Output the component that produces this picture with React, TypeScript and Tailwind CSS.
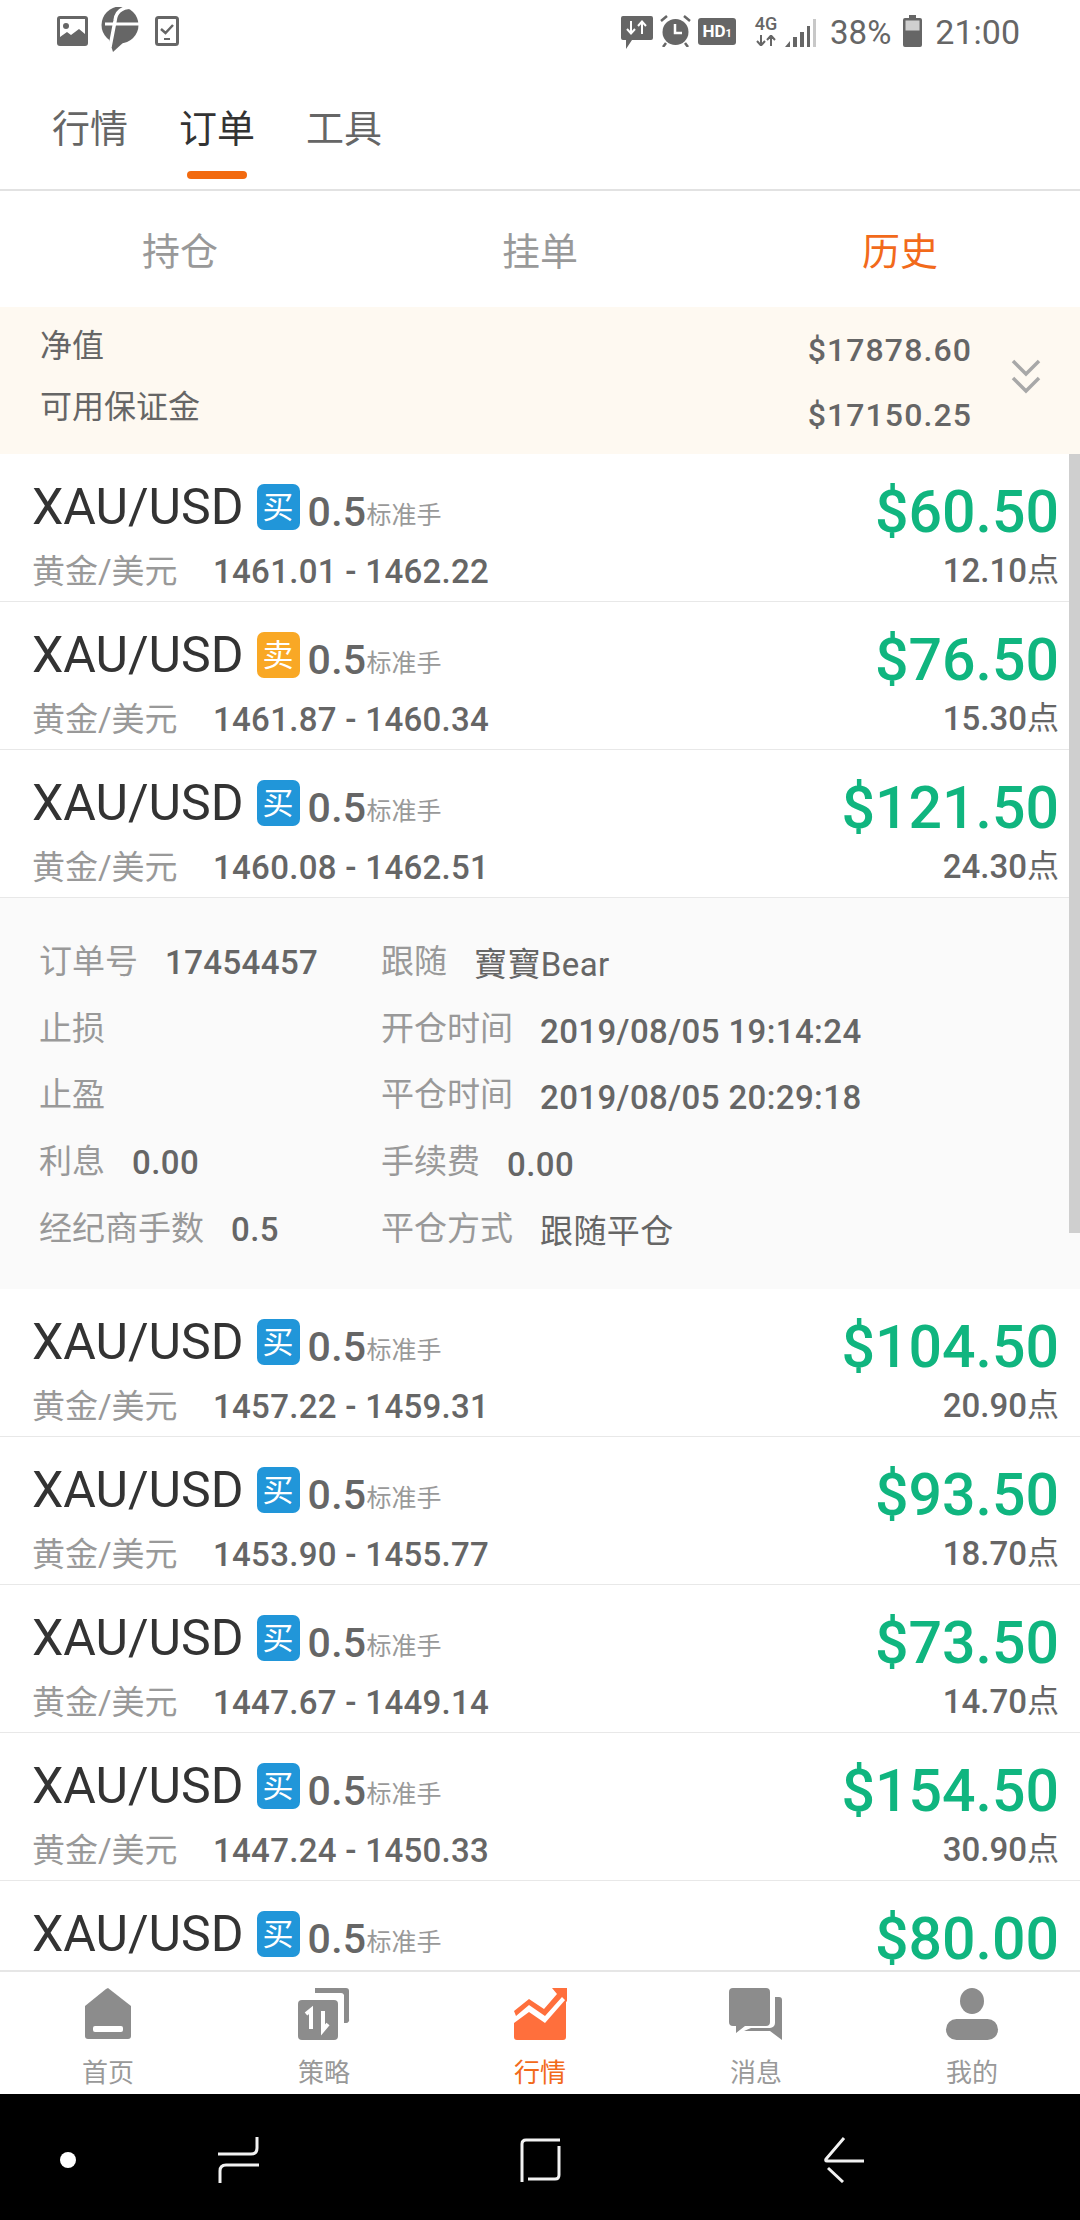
import React from 'react';

interface Order {
  side: 'buy' | 'sell';
  range: string;
  profit: string;
  points: string;
}

const firstOrders: Order[] = [
  { side: 'buy', range: '1461.01 - 1462.22', profit: '$60.50', points: '12.10' },
  { side: 'sell', range: '1461.87 - 1460.34', profit: '$76.50', points: '15.30' },
  { side: 'buy', range: '1460.08 - 1462.51', profit: '$121.50', points: '24.30' },
];

const moreOrders: Order[] = [
  { side: 'buy', range: '1457.22 - 1459.31', profit: '$104.50', points: '20.90' },
  { side: 'buy', range: '1453.90 - 1455.77', profit: '$93.50', points: '18.70' },
  { side: 'buy', range: '1447.67 - 1449.14', profit: '$73.50', points: '14.70' },
  { side: 'buy', range: '1447.24 - 1450.33', profit: '$154.50', points: '30.90' },
];

const detailLeft = [
  { label: '订单号', value: '17454457' },
  { label: '止损', value: '' },
  { label: '止盈', value: '' },
  { label: '利息', value: '0.00' },
  { label: '经纪商手数', value: '0.5' },
];

const detailRight = [
  { label: '跟随', value: '寶寶Bear', plain: true },
  { label: '开仓时间', value: '2019/08/05 19:14:24' },
  { label: '平仓时间', value: '2019/08/05 20:29:18' },
  { label: '手续费', value: '0.00' },
  { label: '平仓方式', value: '跟随平仓', plain: true },
];

const TopLine: React.FC<{ side: Order['side'] }> = ({ side }) => (
  <div className="flex items-center h-[48px] mt-[29px]">
    <span className="text-[50px] leading-none text-[#333]">XAU/USD</span>
    <span
      className={`ml-[13px] w-[43px] h-[46px] rounded-[7px] text-white text-[31px] leading-none flex items-center justify-center ${
        side === 'buy' ? 'bg-[#2196d9]' : 'bg-[#f9a825]'
      }`}
    >
      {side === 'buy' ? '买' : '卖'}
    </span>
    <span className="ml-[8px] text-[41px] leading-none font-medium text-[#666] mt-[10px] tracking-[0.3px]">0.5</span>
    <span className="text-[25px] leading-none text-[#999] mt-[16px]">标准手</span>
  </div>
);

const OrderRow: React.FC<{ order: Order }> = ({ order }) => (
  <div className="h-[148px] shrink-0 border-b border-[#e8e8e8] pl-[32px] pr-[21px] flex justify-between">
    <div>
      <TopLine side={order.side} />
      <div className="flex items-center mt-[20px] h-[40px]">
        <span className="text-[33px] leading-none text-[#999] w-[181px]">黄金/美元</span>
        <span className="text-[33px] leading-none font-medium text-[#666] tracking-[0.3px]">{order.range}</span>
      </div>
    </div>
    <div className="flex flex-col items-end">
      <span className="text-[59px] leading-none font-medium text-[#10b57f] mt-[28px] h-[60px]">{order.profit}</span>
      <span className="text-[33px] leading-none font-medium text-[#666] mt-[8px] h-[40px] flex items-center">
        {order.points}
        <span className="text-[32px] font-normal">点</span>
      </span>
    </div>
  </div>
);

const ClippedRow: React.FC<{ side: Order['side']; profit: string }> = ({ side, profit }) => (
  <div className="h-[88px] shrink-0 pl-[32px] pr-[21px] flex justify-between">
    <TopLine side={side} />
    <span className="text-[59px] leading-none font-medium text-[#10b57f] mt-[28px] h-[59px]">{profit}</span>
  </div>
);

const DetailItem: React.FC<{ label: string; value: string; plain?: boolean; shift?: boolean }> = ({ label, value, plain, shift }) => (
  <div className="flex items-center gap-[27px] h-[66.750px]">
    <span className="text-[33px] leading-none text-[#999]">{label}</span>
    {value && (
      <span className={`text-[33px] leading-none text-[#666] tracking-[0.4px] ${plain ? '' : 'font-medium'} ${shift ? 'mt-[6px]' : 'mt-[2px]'}`}>
        {value}
      </span>
    )}
  </div>
);

const StatusBar = () => (
  <div className="h-[60px] shrink-0 flex items-center pl-[57px] pr-[60px] text-[#666]">
    <svg width="31" height="30" viewBox="0 0 31 30" className="mt-[2px]">
      <rect width="31" height="30" rx="3" fill="#666" />
      <rect x="3" y="3" width="25" height="24" fill="#fff" />
      <circle cx="9" cy="10" r="3" fill="#666" />
      <path d="M3 21 L10 16 L14 19 L22 13 L28 18 V27 H3Z" fill="#666" />
    </svg>
    <svg width="38" height="45" viewBox="0 0 38 45" className="ml-[13px] mb-[2px]">
      <circle cx="19" cy="18" r="18.500" fill="#666" />
      <path d="M8 32 L24 34 L12 45Z" fill="#666" />
      <path d="M30 0 Q15 1 14 14 L9 40" fill="none" stroke="#fff" strokeWidth="3.500" />
      <path d="M4 17 H38" fill="none" stroke="#fff" strokeWidth="3" />
    </svg>
    <svg width="24" height="30" viewBox="0 0 24 30" className="ml-[16px] mt-[2px]">
      <rect x="1.500" y="1.500" width="21" height="27" rx="2" fill="none" stroke="#666" strokeWidth="3" />
      <path d="M6 13 L10.500 17 L18 9" fill="none" stroke="#666" strokeWidth="2.500" />
      <rect x="9" y="22" width="6" height="2" fill="#666" />
    </svg>
    <div className="flex-1" />
    <svg width="32" height="33" viewBox="0 0 32 33" className="mt-[4px]">
      <path d="M2 0 H30 A2 2 0 0 1 32 2 V22 A2 2 0 0 1 30 24 H11 L5 33 V24 H2 A2 2 0 0 1 0 22 V2 A2 2 0 0 1 2 0Z" fill="#666" />
      <path d="M10 5 V17 M6 13 L10 17.500 L14 13 M21 18 V6 M17 10 L21 5.500 L25 10" fill="none" stroke="#fff" strokeWidth="2" />
    </svg>
    <svg width="31" height="32" viewBox="0 0 31 32" className="ml-[7px] mt-[2px]">
      <circle cx="15.500" cy="17" r="13" fill="#666" />
      <path d="M15 9 V18 H22" fill="none" stroke="#fff" strokeWidth="2.500" />
      <path d="M1 6 L7 1 M24 1 L30 6 M6 28 L3 32 M25 28 L28 32" stroke="#666" strokeWidth="2.500" />
    </svg>
    <div className="ml-[7px] w-[38px] h-[27px] rounded-[3px] bg-[#666] text-white font-bold text-[17px] leading-none flex items-center justify-center mt-[3px]">
      HD<span className="text-[11px] mt-[4px]">1</span>
    </div>
    <div className="ml-[18px] w-[24px] flex flex-col items-center mt-[3px]">
      <span className="text-[18px] leading-[14px] font-medium">4G</span>
      <svg width="20" height="11" viewBox="0 0 20 11" className="mt-[4px]">
        <path d="M5 0 V9 M1 6 L5 10.500 L9 6 M15 11 V2 M11 5 L15 0.500 L19 5" fill="none" stroke="#666" strokeWidth="2" />
      </svg>
    </div>
    <svg width="32" height="29" viewBox="0 0 32 29" className="ml-[7px] mt-[4px]">
      <path d="M0 29 L5 23 V29Z M8 19 H12 V29 H8Z M15 14 H19 V29 H15Z M22 8 H25 V29 H22Z" fill="#666" />
      <path d="M28 1 H31 V29 H28Z" fill="#c8c8c8" />
    </svg>
    <span className="ml-[13px] text-[33px] leading-none mt-[4px]">38%</span>
    <svg width="19" height="32" viewBox="0 0 19 32" className="ml-[12px] mt-[2px]">
      <path d="M6 0 H13 V3 H17 A2 2 0 0 1 19 5 V30 A2 2 0 0 1 17 32 H2 A2 2 0 0 1 0 30 V5 A2 2 0 0 1 2 3 H6Z" fill="#666" />
      <rect x="2.500" y="5.500" width="14" height="10" fill="#cfcfcf" />
    </svg>
    <span className="ml-[13px] text-[34px] leading-none mt-[4px]">21:00</span>
  </div>
);

const navItems = [
  {
    label: '首页',
    icon: (
      <svg width="54" height="54" viewBox="0 0 54 54">
        <path d="M27 1 L50 19 V49 A3 3 0 0 1 47 52 H7 A3 3 0 0 1 4 49 V19 L25 2Z" fill="#8c8c8c" />
        <rect x="12" y="39" width="30" height="6" rx="2" fill="#fff" />
      </svg>
    ),
  },
  {
    label: '策略',
    icon: (
      <svg width="54" height="54" viewBox="0 0 54 54">
        <path d="M18 1 H49 A3 3 0 0 1 52 4 V32 A3 3 0 0 1 49 36 H47 V8 A3 3 0 0 0 44 6 H18Z" fill="#8c8c8c" />
        <rect x="1" y="13" width="40" height="40" rx="4" fill="#8c8c8c" />
        <path d="M14 42 V23 L9 27 M26 24 V43 L31 37" fill="none" stroke="#fff" strokeWidth="4" />
      </svg>
    ),
  },
  {
    label: '行情',
    icon: (
      <svg width="54" height="54" viewBox="0 0 54 54">
        <path d="M1 24 L16 12 L31 22 L44 7 L39 1 H54 V15 L49 10 L32 29 L16 18 L3 29Z" fill="#ff6f3c" />
        <path d="M1 36 L16 25 L32 36 L53 12 V50 A3 3 0 0 1 50 53 H4 A3 3 0 0 1 1 50Z" fill="#ff6f3c" />
      </svg>
    ),
  },
  {
    label: '消息',
    icon: (
      <svg width="54" height="54" viewBox="0 0 54 54">
        <path d="M4 1 H37 A4 4 0 0 1 41 5 V35 A4 4 0 0 1 37 39 H16 L7 46 V39 H4 A4 4 0 0 1 0 35 V5 A4 4 0 0 1 4 1Z" fill="#8c8c8c" />
        <path d="M46 10 H50 A3 3 0 0 1 53 13 V53 L41 44 H15 L22 41 H41 A5 5 0 0 0 46 36Z" fill="#8c8c8c" />
      </svg>
    ),
  },
  {
    label: '我的',
    icon: (
      <svg width="54" height="54" viewBox="0 0 54 54">
        <ellipse cx="27" cy="14" rx="12" ry="13" fill="#8c8c8c" />
        <rect x="1" y="32" width="52" height="21" rx="10.500" fill="#8c8c8c" />
      </svg>
    ),
  },
];

const BottomNav = () => (
  <div className="h-[124px] shrink-0 border-t-2 border-[#e6e6e6] grid grid-cols-5 bg-white">
    {navItems.map((item) => (
      <div key={item.label} className="flex flex-col items-center pt-[15px]">
        {item.icon}
        <span className={`text-[26px] leading-none mt-[19px] ${item.label === '行情' ? 'text-[#f26a1b]' : 'text-[#999]'}`}>{item.label}</span>
      </div>
    ))}
  </div>
);

const SystemBar = () => (
  <div className="h-[126px] shrink-0 bg-black flex items-center pl-[60px] pt-[5px]">
    <div className="w-[16px] h-[16px] rounded-full bg-white" />
    <svg width="41" height="46" viewBox="0 0 41 46" className="ml-[142px]" fill="none" stroke="#f2f2f2" strokeWidth="3">
      <path d="M39 0 V11 Q39 17 33 17 H0" />
      <path d="M41 28 H8 Q2 28 2 34 V46" />
    </svg>
    <svg width="41" height="44" viewBox="0 0 41 44" className="ml-[261px]" fill="none" stroke="#f2f2f2" strokeWidth="3">
      <path d="M2 44 V6 Q2 2 6 2 H40" />
      <path d="M8 41 H35 Q39 41 39 37 V8" />
    </svg>
    <svg width="41" height="46" viewBox="0 0 41 46" className="ml-[262px]" fill="none" stroke="#f2f2f2" strokeWidth="3">
      <path d="M21 1 L3 22 Q2 24 4 24 H41" />
      <path d="M5 31 L20 45" />
    </svg>
  </div>
);

export default function App() {
  return (
    <div className="w-[1080px] h-[2220px] bg-white flex flex-col overflow-hidden font-[Roboto,'Noto_Sans_CJK_SC',sans-serif]">
      <StatusBar />

      <div className="h-[131px] shrink-0 border-b-2 border-[#e2e2e2] flex pl-[52px] gap-[51px] bg-white">
        <div className="text-[38px] leading-none text-[#666] pt-[50px]">行情</div>
        <div className="flex flex-col items-center text-[38px] leading-none text-[#333] pt-[50px]">
          订单
          <div className="w-[60px] h-[8px] rounded-[4px] bg-[#f26a0f] mt-[23px]" />
        </div>
        <div className="text-[38px] leading-none text-[#666] pt-[50px]">工具</div>
      </div>

      <div className="h-[116px] shrink-0 grid grid-cols-3 items-center text-[38px] leading-none text-center text-[#999] pt-[6px]">
        <span>持仓</span>
        <span>挂单</span>
        <span className="text-[#f26a1b]">历史</span>
      </div>

      <div className="h-[147px] shrink-0 bg-[#fef9f1] pl-[40px] pr-[39px] flex items-center text-[#666]">
        <div className="flex flex-col gap-[29px] text-[32px] leading-none -mt-[9px]">
          <span>净值</span>
          <span>可用保证金</span>
        </div>
        <div className="flex-1" />
        <div className="flex flex-col items-end gap-[33px] text-[32px] leading-none font-medium tracking-[1.100px] pt-[3px]">
          <span>$17878.60</span>
          <span>$17150.25</span>
        </div>
        <svg width="30" height="35" viewBox="0 0 30 35" className="ml-[39px] -mt-[8px]" fill="none" stroke="#a8a8a8" strokeWidth="3.500">
          <path d="M2 2 L15 15 L28 2" />
          <path d="M2 19 L15 32 L28 19" />
        </svg>
      </div>

      <div className="relative flex-1 min-h-0 overflow-hidden">
        <div className="absolute right-0 top-0 w-[11px] h-[779px] bg-[#cfcfcf]" />
        {firstOrders.map((order, i) => (
          <OrderRow key={i} order={order} />
        ))}
        <div className="h-[391px] bg-[#fafafa] flex pl-[39px] pt-[30px]">
          <div className="w-[342px]">
            {detailLeft.map((d) => (
              <DetailItem key={d.label} label={d.label} value={d.value} />
            ))}
          </div>
          <div>
            {detailRight.map((d) => (
              <DetailItem key={d.label} label={d.label} value={d.value} plain={d.plain} shift />
            ))}
          </div>
        </div>
        {moreOrders.map((order, i) => (
          <OrderRow key={i} order={order} />
        ))}
        <ClippedRow side="buy" profit="$80.00" />
      </div>

      <BottomNav />
      <SystemBar />
    </div>
  );
}
